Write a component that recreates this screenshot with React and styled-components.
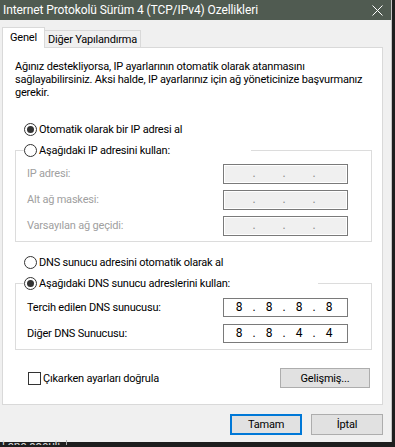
import React from "react";
import styled, { createGlobalStyle } from "styled-components";

const GlobalStyle = createGlobalStyle`
  html, body {
    margin: 0;
    padding: 0;
    background: #1e1e1e;
  }
  body {
    font-family: Tahoma, Roboto, "Liberation Sans", sans-serif;
    font-size: 11px;
    letter-spacing: -0.2px;
    color: #000;
  }
  * { box-sizing: border-box; }
`;

const Screen = styled.div`
  width: 395px;
  height: 447px;
  overflow: hidden;
  background: #1e1e1e;
  display: flex;
  flex-direction: column;
`;

const Window = styled.div`
  width: 392px;
  height: 442px;
  flex: none;
  background: #f0f0f0;
  border-right: 1px solid #c4c4c4;
  display: flex;
  flex-direction: column;
`;

const TitleBar = styled.div`
  height: 20px;
  flex: none;
  background: #505b51;
  color: #fff;
  display: flex;
  align-items: center;
  justify-content: space-between;
  padding: 0 8px 0 3px;
  font-family: "Segoe UI", Roboto, sans-serif;
  font-size: 12px;
  letter-spacing: -0.1px;
  white-space: nowrap;
`;

const Body = styled.div`
  padding: 8px 8px 0 2px;
  display: flex;
  flex-direction: column;
`;

const TabRow = styled.div`
  display: flex;
  align-items: flex-end;
  height: 20px;
  position: relative;
  z-index: 1;
  margin-bottom: -1px;
`;

const Tab = styled.div`
  width: ${(p) => p.$w}px;
  height: ${(p) => (p.$active ? 21 : 18)}px;
  background: ${(p) => (p.$active ? "#fff" : "#f0f0f0")};
  border: 1px solid #d9d9d9;
  border-bottom: ${(p) => (p.$active ? "none" : "1px solid #d9d9d9")};
  border-left: ${(p) => (p.$active ? "1px solid #d9d9d9" : "none")};
  display: flex;
  align-items: center;
  justify-content: center;
  padding-bottom: ${(p) => (p.$active ? 2 : 0)}px;
  white-space: nowrap;
`;

const Panel = styled.div`
  width: 381px;
  height: 358px;
  background: #fff;
  border: 1px solid #d9d9d9;
  padding: 12px 11px 0 12px;
  display: flex;
  flex-direction: column;
`;

const Intro = styled.p`
  margin: 0;
  line-height: 13px;
  white-space: nowrap;
`;

const Choice = styled.label`
  display: flex;
  align-items: center;
  gap: 2px;
  height: 13px;
  margin-left: ${(p) => p.$indent ?? 9}px;
  margin-top: ${(p) => p.$top ?? 0}px;
  width: ${(p) => (p.$w ? `${p.$w}px` : "auto")};
  white-space: nowrap;
`;

const Radio = styled.span`
  width: 13px;
  height: 13px;
  flex: none;
  border: 1px solid #333;
  border-radius: 50%;
  background: #fff;
  display: flex;
  align-items: center;
  justify-content: center;
  &::after {
    content: "";
    width: 7px;
    height: 7px;
    border-radius: 50%;
    background: ${(p) => (p.$on ? "#333" : "transparent")};
  }
`;

const Check = styled.span`
  width: 13px;
  height: 13px;
  flex: none;
  border: 1px solid #333;
  background: #fff;
`;

const Group = styled.fieldset`
  margin: ${(p) => p.$top}px 0 0 0;
  padding: ${(p) => p.$pt}px 23px ${(p) => p.$bottom}px 11px;
  min-inline-size: 0;
  width: 357px;
  border: 1px solid #dcdcdc;
  display: flex;
  flex-direction: column;
  gap: 7px;
`;

const Legend = styled.legend`
  padding: 0;
  margin-left: -3px;
`;

const FieldRow = styled.div`
  display: flex;
  align-items: center;
  justify-content: space-between;
  height: 19px;
  color: ${(p) => (p.$disabled ? "#a0a0a0" : "#000")};
  white-space: nowrap;
`;

const IpBox = styled.div`
  width: 125px;
  height: ${(p) => (p.$disabled ? 20 : 19)}px;
  border: 1px solid #7a7a7a;
  background: ${(p) => (p.$disabled ? "#f0f0f0" : "#fff")};
  box-shadow: ${(p) => (p.$disabled ? "inset 0 0 0 1px #fff" : "none")};
  display: grid;
  grid-template-columns: 24px 6px 24px 6px 24px 6px 24px;
  align-items: center;
  padding-left: 3px;
  color: ${(p) => (p.$disabled ? "#8a8a8a" : "#000")};
  font-size: 12px;
  letter-spacing: 0;
`;

const Cell = styled.span`
  text-align: center;
  line-height: 17px;
`;

const BottomRow = styled.div`
  display: flex;
  align-items: center;
  justify-content: space-between;
  margin-top: 18px;
  padding: 0 1px 0 13px;
  height: 20px;
`;

const Button = styled.button`
  font: inherit;
  letter-spacing: inherit;
  color: #000;
  width: ${(p) => p.$w}px;
  height: ${(p) => p.$h}px;
  background: #e1e1e1;
  border: ${(p) => (p.$primary ? "2px solid #0078d7" : "1px solid #adadad")};
  padding: 0;
  margin: 0;
`;

const Footer = styled.div`
  display: flex;
  justify-content: flex-end;
  gap: 9px;
  margin-top: 9px;
`;

const Strip = styled.div`
  height: 5px;
  overflow: hidden;
  color: #d8d8d8;
  font-size: 12px;
  line-height: 12px;
  padding-left: 2px;
  margin-top: -2px;
`;

const StripText = styled.span`
  display: inline-block;
  padding-right: 6px;
  border-right: 1px solid #aaa;
`;

const Octets = ({ values, disabled }) => (
  <IpBox $disabled={disabled}>
    {[0, 1, 2, 3].map((i) => (
      <React.Fragment key={i}>
        <Cell>{values ? values[i] : ""}</Cell>
        {i < 3 && <Cell>.</Cell>}
      </React.Fragment>
    ))}
  </IpBox>
);

const CloseIcon = () => (
  <svg width="11" height="11" viewBox="0 0 11 11">
    <path d="M0.5 0.5 L10.5 10.5 M10.5 0.5 L0.5 10.5" stroke="#fff" strokeWidth="1" />
  </svg>
);

export default function App() {
  return (
    <Screen>
      <GlobalStyle />
      <Window>
        <TitleBar>
          <span>Internet Protokolü Sürüm 4 (TCP/IPv4) Ozellikleri</span>
          <CloseIcon />
        </TitleBar>
        <Body>
          <TabRow>
            <Tab $active $w={43}>Genel</Tab>
            <Tab $w={96}>Diğer Yapılandırma</Tab>
          </TabRow>
          <Panel>
            <Intro>
              Ağınız destekliyorsa, IP ayarlarının otomatik olarak atanmasını
              <br />
              sağlayabilirsiniz. Aksi halde, IP ayarlarınız için ağ yöneticinize başvurmanız
              <br />
              gerekir.
            </Intro>
            <Choice $top={24}>
              <Radio $on />
              Otomatik olarak bir IP adresi al
            </Choice>
            <Group $top={8} $pt={7} $bottom={6}>
              <Legend>
                <Choice $indent={0} $w={227}>
                  <Radio />
                  Aşağıdaki IP adresini kullan:
                </Choice>
              </Legend>
              <FieldRow $disabled>
                IP adresi:
                <Octets disabled />
              </FieldRow>
              <FieldRow $disabled>
                Alt ağ maskesi:
                <Octets disabled />
              </FieldRow>
              <FieldRow $disabled>
                Varsayılan ağ geçidi:
                <Octets disabled />
              </FieldRow>
            </Group>
            <Choice $top={14}>
              <Radio />
              DNS sunucu adresini otomatik olarak al
            </Choice>
            <Group $top={8} $pt={8} $bottom={6}>
              <Legend>
                <Choice $indent={0} $w={294}>
                  <Radio $on />
                  Aşağıdaki DNS sunucu adreslerini kullan:
                </Choice>
              </Legend>
              <FieldRow>
                Tercih edilen DNS sunucusu:
                <Octets values={["8", "8", "8", "8"]} />
              </FieldRow>
              <FieldRow>
                Diğer DNS Sunucusu:
                <Octets values={["8", "8", "4", "4"]} />
              </FieldRow>
            </Group>
            <BottomRow>
              <Choice $indent={0}>
                <Check />
                Çıkarken ayarları doğrula
              </Choice>
              <Button $w={90} $h={20}>Gelişmiş...</Button>
            </BottomRow>
          </Panel>
          <Footer>
            <Button $primary $w={72} $h={21}>Tamam</Button>
            <Button $w={72} $h={21}>İptal</Button>
          </Footer>
        </Body>
      </Window>
      <Strip>
        <StripText>l ana soeuli</StripText>
      </Strip>
    </Screen>
  );
}
